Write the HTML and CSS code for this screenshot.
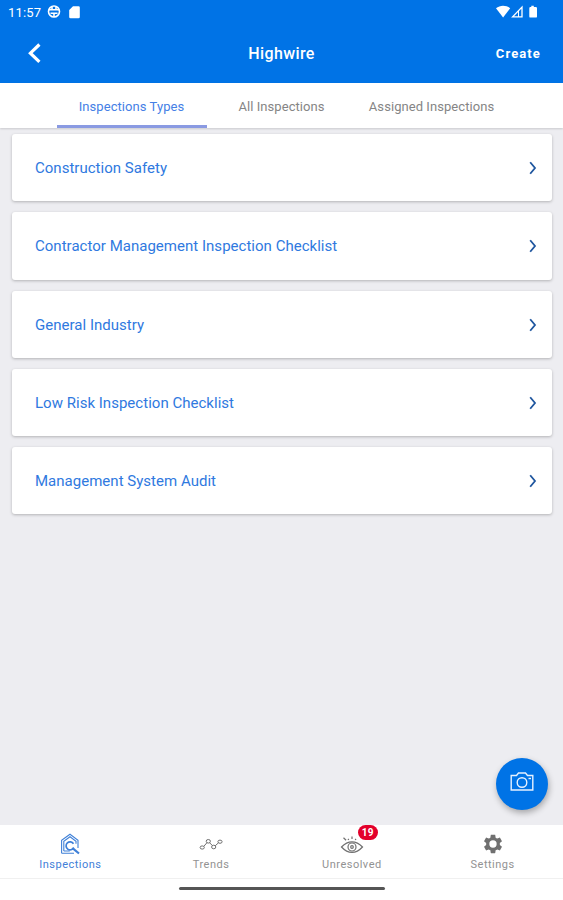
FILE: index.html
```html
<!DOCTYPE html>
<html lang="en">
<head>
    <meta charset="UTF-8">
    <meta name="viewport" content="width=device-width, initial-scale=1.0">
    <title>Highwire</title>
    <link rel="stylesheet" href="styles.css">
</head>
<body>
    <div class="app">
        <header class="header">
            <div class="status-bar">
                <span class="time">11:57</span>
                <svg class="status-globe" width="14" height="14" viewBox="0 0 14 14" fill="none" stroke="#fff" stroke-width="1.6">
                    <circle cx="7" cy="6.500" r="5.500"/>
                    <path d="M2 4.800h10M3.500 8.200h7M7 8.200V12M5 2v2.700M9 2v2.700"/>
                </svg>
                <svg class="status-card" width="11" height="13" viewBox="0 0 11 13" fill="#fff">
                    <path d="M4 .2h5.500a1.300 1.300 0 0 1 1.300 1.300v9.400a1.300 1.300 0 0 1-1.300 1.300h-8A1.300 1.300 0 0 1 .2 10.900V4z"/>
                </svg>
                <div class="status-right">
                    <svg width="43" height="14" viewBox="0 0 43 14" fill="#fff">
                        <path d="M0 3.200C4-.2 10-.2 14.200 3.200L7.100 12.400z"/>
                        <path d="M26 2v9.800H16.600z" fill="none" stroke="#fff" stroke-width="1.300"/>
                        <path d="M22.500 5.500V12" stroke="#fff"/>
                        <path d="M35.300.800h2.500v1.200h2A1.200 1.200 0 0 1 41 3.200v8.200a1.200 1.200 0 0 1-1.200 1.200h-5.300a1.200 1.200 0 0 1-1.200-1.200V3.200a1.200 1.200 0 0 1 1.200-1.200h.8z"/>
                    </svg>
                </div>
            </div>
            <div class="title-bar">
                <a class="back" href="#" aria-label="Back">
                    <svg width="14" height="22" viewBox="0 0 14 22" fill="none" stroke="#fff" stroke-width="3.200">
                        <path d="M12.400 1.500L3.400 10.200l9 8.700"/>
                    </svg>
                </a>
                <h1>Highwire</h1>
                <a class="create" href="#">Create</a>
            </div>
        </header>

        <nav class="tabs">
            <a class="tab active" href="#">Inspections Types</a>
            <a class="tab" href="#">All Inspections</a>
            <a class="tab" href="#">Assigned Inspections</a>
        </nav>

        <main class="list">
            <a class="card" href="#">
                <span>Construction Safety</span>
                <svg class="chevron" width="8" height="14" viewBox="0 0 8 14"><path d="M1.200 1.200L6 7l-4.800 5.800"/></svg>
            </a>
            <a class="card" href="#">
                <span>Contractor Management Inspection Checklist</span>
                <svg class="chevron" width="8" height="14" viewBox="0 0 8 14"><path d="M1.200 1.200L6 7l-4.800 5.800"/></svg>
            </a>
            <a class="card" href="#">
                <span>General Industry</span>
                <svg class="chevron" width="8" height="14" viewBox="0 0 8 14"><path d="M1.200 1.200L6 7l-4.800 5.800"/></svg>
            </a>
            <a class="card" href="#">
                <span>Low Risk Inspection Checklist</span>
                <svg class="chevron" width="8" height="14" viewBox="0 0 8 14"><path d="M1.200 1.200L6 7l-4.800 5.800"/></svg>
            </a>
            <a class="card" href="#">
                <span>Management System Audit</span>
                <svg class="chevron" width="8" height="14" viewBox="0 0 8 14"><path d="M1.200 1.200L6 7l-4.800 5.800"/></svg>
            </a>

            <button class="camera" aria-label="Take photo">
                <svg width="24" height="20" viewBox="0 0 24 20" fill="none" stroke="#e6f1ff" stroke-width="1.400">
                    <path d="M1.200 3.500h5.300L8.500 1h7l2 2.500h5.300V18H1.200z"/>
                    <circle cx="12" cy="10.500" r="4.800"/>
                    <path d="M18.500 6.500H21"/>
                </svg>
            </button>
        </main>

        <nav class="bottom-nav">
            <a class="nav-item active" href="#">
                <svg width="22" height="22" viewBox="0 0 22 22" fill="none" stroke="currentColor" stroke-width="1.100">
                    <path d="M2.600 20.200V7.200L11 1.200l8 6V15M2.600 20.200H15"/>
                    <path d="M4.800 18V8.300L11 3.800l6 4.500v2.500M4.800 18h6"/>
                    <path d="M14.500 10.800a4 4 0 1 0 .2 3.800" stroke-width="1.700"/>
                    <path d="M13.500 15.200l6.500 5.300" stroke-width="2.200"/>
                </svg>
                <span>Inspections</span>
            </a>
            <a class="nav-item" href="#">
                <svg width="24" height="22" viewBox="0 0 24 22" fill="none" stroke="currentColor" stroke-width="1">
                    <ellipse cx="3.200" cy="14.500" rx="2.100" ry="1.600"/>
                    <ellipse cx="9.300" cy="8.300" rx="2.100" ry="1.800"/>
                    <ellipse cx="14.700" cy="14" rx="2.100" ry="1.800"/>
                    <ellipse cx="21" cy="8.700" rx="2.100" ry="1.600"/>
                    <path d="M4.800 13.400L8 9.600M10.500 9.700l3 2.900M16.200 12.800l3.400-3.100"/>
                </svg>
                <span>Trends</span>
            </a>
            <a class="nav-item" href="#">
                <svg width="24" height="22" viewBox="0 0 24 22" fill="none" stroke="currentColor" stroke-width="1.200">
                    <path d="M1.500 14Q6.500 8.800 12 8.800T22.500 14Q17.500 19.400 12 19.400T1.500 14z"/>
                    <circle cx="12" cy="14" r="4"/>
                    <circle cx="12" cy="14" r="1.300"/>
                    <path d="M12 3.500v2.500M8 5.800l.8 1.200M16 5.800l-.8 1.200M3.500 4.800l2.600 2.400"/>
                </svg>
                <em class="badge">19</em>
                <span>Unresolved</span>
            </a>
            <a class="nav-item" href="#">
                <svg width="22" height="22" viewBox="0 0 24 24" fill="currentColor">
                    <path d="M19.430 12.980c.04-.32.07-.64.07-.98s-.03-.66-.07-.98l2.110-1.650c.19-.15.24-.42.12-.64l-2-3.460c-.12-.22-.39-.3-.61-.22l-2.490 1c-.52-.4-1.080-.73-1.690-.98l-.38-2.650C14.460 2.180 14.250 2 14 2h-4c-.25 0-.46.18-.49.42l-.38 2.650c-.61.25-1.170.59-1.690.98l-2.490-1c-.23-.09-.49 0-.61.22l-2 3.460c-.13.22-.07.49.12.64l2.110 1.650c-.04.32-.07.65-.07.98s.03.66.07.98l-2.110 1.650c-.19.15-.24.42-.12.64l2 3.460c.12.22.39.3.61.22l2.490-1c.52.4 1.080.73 1.690.98l.38 2.650c.03.24.24.42.49.42h4c.25 0 .46-.18.49-.42l.38-2.650c.61-.25 1.170-.59 1.690-.98l2.490 1c.23.09.49 0 .61-.22l2-3.460c.12-.22.07-.49-.12-.64zM12 16a4 4 0 1 1 0-8 4 4 0 0 1 0 8z"/>
                </svg>
                <span>Settings</span>
            </a>
        </nav>
        <div class="gesture-area">
            <div class="gesture-bar"></div>
        </div>
    </div>
</body>
</html>
```

FILE: styles.css
```css
* {
    box-sizing: border-box;
}

body {
    margin: 0;
    font-family: Roboto, "Liberation Sans", sans-serif;
    background-color: #ededf1;
}

a {
    color: inherit;
    text-decoration: none;
}

.app {
    display: flex;
    flex-direction: column;
    height: 100vh;
}

/* Header */
.header {
    height: 83px;
    background-color: #0073e6;
    color: #fff;
}

.status-bar {
    display: flex;
    align-items: center;
    height: 24px;
    padding: 0 24px 0 8px;
}

.time {
    width: 39px;
    font-size: 13px;
    letter-spacing: 0.2px;
}

.status-card {
    margin-left: 8px;
}

.status-right {
    display: flex;
    margin-left: auto;
}

.title-bar {
    display: grid;
    grid-template-columns: 1fr auto 1fr;
    align-items: center;
    height: 59px;
    padding: 0 22px 0 27px;
}

.back {
    display: flex;
}

h1 {
    margin: 0 5px 0 0;
    font-size: 16px;
    font-weight: 500;
    letter-spacing: 0.4px;
}

.create {
    justify-self: end;
    font-size: 13px;
    font-weight: 700;
    letter-spacing: 1.1px;
}

/* Tabs */
.tabs {
    display: flex;
    justify-content: center;
    height: 45px;
    background-color: #fff;
    box-shadow: 0 1px 2px rgba(0, 0, 0, 0.15);
}

.tab {
    width: 150px;
    padding-top: 3px;
    border-bottom: 3px solid transparent;
    color: #858585;
    font-size: 13px;
    line-height: 41px;
    letter-spacing: 0.06px;
    text-align: center;
    white-space: nowrap;
}

.tab.active {
    color: #4580e6;
    border-bottom-color: #8a9ae2;
}

/* Inspection list */
.list {
    position: relative;
    display: flex;
    flex: 1;
    flex-direction: column;
    gap: 11px;
    padding: 6px 11px 0 12px;
}

.card {
    display: flex;
    align-items: center;
    justify-content: space-between;
    height: 67.3px;
    padding: 1px 15px 0 23px;
    border-radius: 3px;
    background-color: #fff;
    box-shadow: 0 1px 3px rgba(0, 0, 0, 0.25);
    color: #2f79e0;
    font-size: 15px;
    letter-spacing: 0.02px;
}

.chevron {
    fill: none;
    stroke: #1f569f;
    stroke-width: 1.8;
}

.camera {
    position: absolute;
    right: 15px;
    bottom: 15px;
    display: flex;
    align-items: center;
    justify-content: center;
    width: 52px;
    height: 52px;
    padding: 0 0 4px;
    border: none;
    border-radius: 50%;
    background-color: #0073e6;
    box-shadow: 1px 3px 6px rgba(0, 0, 0, 0.3);
}

/* Bottom navigation */
.bottom-nav {
    display: flex;
    height: 54px;
    border-bottom: 1px solid #f0f0f0;
    background-color: #fff;
}

.nav-item {
    position: relative;
    display: flex;
    flex: 1;
    flex-direction: column;
    align-items: center;
    padding-top: 8px;
    color: #707070;
    font-size: 11px;
    line-height: 16px;
    letter-spacing: 0.5px;
}

.nav-item span {
    margin-top: 2px;
    color: #929292;
}

.nav-item.active,
.nav-item.active span {
    color: #3f80d8;
}

.badge {
    position: absolute;
    top: 0;
    left: 50%;
    min-width: 20px;
    margin-left: 6px;
    border-radius: 8px;
    background-color: #e3002b;
    color: #fff;
    font-size: 10px;
    font-style: normal;
    font-weight: 700;
    line-height: 15px;
    text-align: center;
}

.gesture-area {
    display: flex;
    justify-content: center;
    height: 21px;
    padding-top: 8px;
    background-color: #fff;
}

.gesture-bar {
    width: 206px;
    height: 3px;
    border-radius: 2px;
    background-color: #555;
}
```
